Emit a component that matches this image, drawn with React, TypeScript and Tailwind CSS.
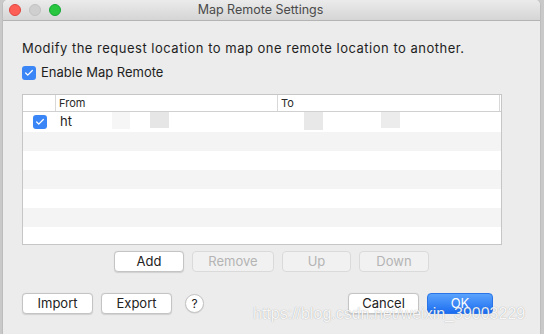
import { Check } from 'lucide-react';

const font = { fontFamily: 'Inter, "Liberation Sans", sans-serif' };

function MacCheck({ className = '' }: { className?: string }) {
  return (
    <span className={`flex items-center justify-center rounded-[3px] bg-[#3a86f7] ${className}`}>
      <Check className="h-[10px] w-[10px] text-white" strokeWidth={3} />
    </span>
  );
}

function Btn({ label, w, disabled = false }: { label: string; w: string; disabled?: boolean }) {
  return (
    <button
      className={`flex h-[21px] items-center justify-center rounded-[4px] border text-[13px] ${w} ${
        disabled
          ? 'border-[#dadada] bg-[#f1f1f1] text-[#b4b4b4]'
          : 'border-[#c4c4c4] bg-white text-[#222] shadow-[0_0.5px_1px_rgba(0,0,0,0.12)]'
      }`}
    >
      {label}
    </button>
  );
}

export default function App() {
  const stripes = ['bg-[#f4f4f4]', 'bg-white', 'bg-[#f4f4f4]', 'bg-white', 'bg-[#f4f4f4]'];

  return (
    <div className="relative flex h-[334px] w-[544px] overflow-hidden bg-[#c9c9c9]" style={font}>
      {/* Window */}
      <div className="ml-[2px] flex h-full w-[539px] flex-col rounded-t-[5px] border-x border-[#bdbdbd] bg-[#ececec]">
        {/* Title bar */}
        <div className="relative flex h-[21px] shrink-0 items-center rounded-t-[5px] border-b border-[#b4b4b4] bg-gradient-to-b from-[#ebebeb] to-[#d5d5d5] px-[6px]">
          <div className="flex gap-[8px]">
            <span className="h-[12px] w-[12px] rounded-full border border-[#e0443e] bg-[#fd5f57]" />
            <span className="h-[12px] w-[12px] rounded-full border border-[#c2c2c2] bg-[#cfcfcf]" />
            <span className="h-[12px] w-[12px] rounded-full border border-[#14a736] bg-[#29c63f]" />
          </div>
          <div className="absolute inset-0 flex items-center justify-center pr-[22px] text-[12.5px] text-[#4a4a4a]">
            Map Remote Settings
          </div>
        </div>

        {/* Body */}
        <div className="flex flex-col px-[19px]">
          <p className="mt-[19px] h-[16px] text-[13px] leading-[16px] tracking-[0.5px] text-[#1e1e1e]">
            Modify the request location to map one remote location to another.
          </p>
          <label className="mt-[10px] flex h-[14px] items-center gap-[5px] text-[13px] text-[#1e1e1e]">
            <MacCheck className="h-[14px] w-[14px]" />
            Enable Map Remote
          </label>

          {/* Table */}
          <div className="mt-[14px] flex h-[151px] w-[480px] flex-col overflow-hidden border border-[#c6c6c6] bg-white">
            <div className="flex h-[17px] shrink-0 items-center border-b border-[#d0d0d0] text-[11px] text-[#2a2a2a]">
              <div className="h-full w-[33px] border-r border-[#d8d8d8]" />
              <div className="flex h-full w-[222px] items-center border-r border-[#d8d8d8] pl-[3px]">From</div>
              <div className="flex h-full w-[222px] items-center border-r border-[#d8d8d8] pl-[3px]">To</div>
            </div>
            <div className="flex h-[20px] shrink-0 items-center bg-white text-[13px] text-[#1e1e1e]">
              <div className="flex w-[33px] justify-center pl-[1px]">
                <MacCheck className="h-[14px] w-[14px]" />
              </div>
              <span className="pl-[4px]">ht</span>
              <span className="ml-[40px] h-[17px] w-[18px] self-start bg-[#f6f6f6]" />
              <span className="ml-[20px] h-[16px] w-[19px] self-start bg-[#e6e6e6]" />
              <span className="ml-[135px] h-[18px] w-[19px] self-start bg-[#e8e8e8]" />
              <span className="ml-[58px] h-[16px] w-[19px] self-start bg-[#ececec]" />
            </div>
            {stripes.map((c, i) => (
              <div key={i} className={`h-[19px] shrink-0 ${c}`} />
            ))}
            <div className="flex-1 bg-white" />
          </div>

          {/* Table buttons */}
          <div className="mt-[6px] flex gap-[8px] pl-[92px]">
            <Btn label="Add" w="w-[70px]" />
            <Btn label="Remove" w="w-[82px]" disabled />
            <Btn label="Up" w="w-[69px]" disabled />
            <Btn label="Down" w="w-[70px]" disabled />
          </div>

          {/* Bottom buttons */}
          <div className="mt-[21px] flex items-center">
            <div className="flex items-center gap-[8px]">
              <Btn label="Import" w="w-[71px]" />
              <Btn label="Export" w="w-[71px]" />
              <span className="ml-[5px] flex h-[19px] w-[19px] items-center justify-center rounded-full border border-[#c4c4c4] bg-white text-[12px] text-[#222] shadow-[0_0.5px_1px_rgba(0,0,0,0.12)]">
                ?
              </span>
            </div>
            <div className="ml-auto mr-[28px] flex gap-[8px]">
              <Btn label="Cancel" w="w-[71px]" />
              <button className="flex h-[21px] w-[66px] items-center justify-center rounded-[4px] border border-[#2a74e8] bg-gradient-to-b from-[#5aa2fb] to-[#1a6cf1] text-[13px] text-white">
                OK
              </button>
            </div>
          </div>
        </div>
      </div>

      {/* Watermark */}
      <div
        className="pointer-events-none absolute left-[253px] top-[305px] text-[16px] leading-[18px] text-white/90"
        style={{ fontFamily: '"Liberation Sans", Arial, sans-serif', textShadow: '0 0 1px rgba(0,0,0,0.35)' }}
      >
        https://blog.csdn.net/weixin_39003229
      </div>
    </div>
  );
}
